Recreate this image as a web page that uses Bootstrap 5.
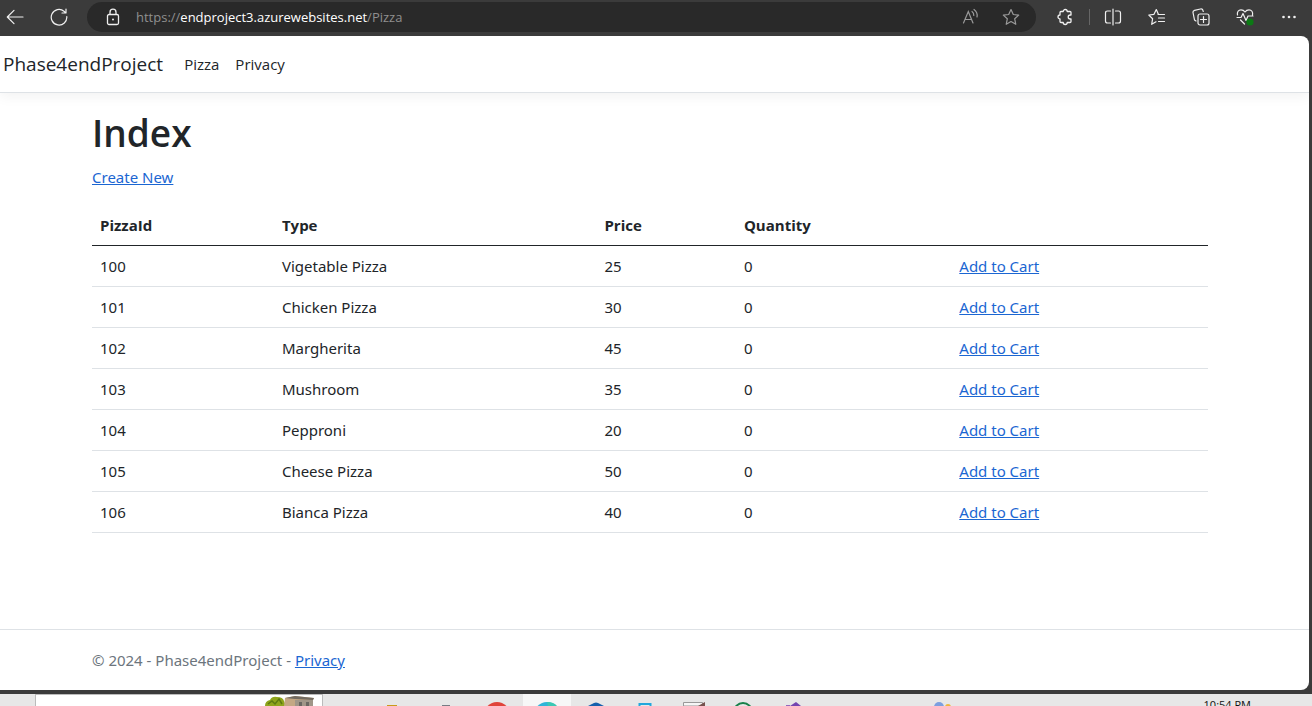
<!DOCTYPE html>
<html lang="en">
<head>
<meta charset="utf-8">
<meta name="viewport" content="width=device-width, initial-scale=1">
<title>Index - Phase4endProject</title>
<link rel="stylesheet" href="https://cdn.jsdelivr.net/npm/bootstrap@5.3.0/dist/css/bootstrap.min.css">
<script src="https://cdn.jsdelivr.net/npm/bootstrap@5.3.0/dist/js/bootstrap.bundle.min.js" defer></script>
<style>
  body { font-family: "Open Sans", "Noto Sans", sans-serif; font-size: 15px; line-height: 24px; background: #3b3b3b; }
  svg { display: block; flex: none; }

  /* browser toolbar */
  .toolbar { height: 36px; padding: 0 12px 2px 4px; color: #f0f0f0; }
  .tool { width: 22px; height: 22px; padding: 0; border: 0; background: none; color: inherit; display: flex; align-items: center; justify-content: center; flex: none; }
  .reload { margin-left: 22px; }
  .omnibox { height: 30px; margin-left: 17px; padding: 0 14px 0 16px; background: #292929; border-radius: 15px; }
  .address { font-size: 13px; line-height: 20px; color: #8f8f8f; text-decoration: none; margin-left: 13px; }
  .address b { font-weight: 400; color: #fff; }
  .dim { color: #9a9a9a; }
  .omnibox .dim { margin-left: 18px; }
  .tool-group { gap: 22px; margin-left: 18px; }
  .rule { width: 1px; height: 16px; background: #666; margin: 0 -10px 0 -9px; }

  /* web page */
  .viewport { background: #fff; border-radius: 0 8px 8px 0; margin: 0 3px 4px 0; overflow: hidden; }
  .site-head { height: 57px; border-bottom: 1px solid #dee2e6; box-shadow: 0 4px 12px rgba(0,0,0,.05); margin-bottom: 16px; padding: 0 3px; }
  .site-head .navbar-brand { font-size: 19px; line-height: 30px; padding: 0; margin-right: 13px; color: #212529; }
  .site-head .nav-link { color: #212529; padding: 8px; }
  .page-body { padding-right: 9px; font-family: "Noto Sans", "Open Sans", sans-serif; }
  h1 { font-family: "Open Sans", "Noto Sans", sans-serif; font-size: 37px; font-weight: 600; line-height: 48px; margin-bottom: 8px; }
  .page-body a { color: #1b66d2; }
  .table { margin-bottom: 16px; table-layout: fixed; }
  .table thead th { border-bottom-color: #212529; font-family: "Open Sans", "Noto Sans", sans-serif; }
  .c-id { width: 16.3%; } .c-type { width: 28.9%; } .c-price { width: 12.5%; } .c-qty { width: 19.3%; }
  .site-foot { border-top: 1px solid #dee2e6; line-height: 60px; color: #6c757d; }

  /* desktop taskbar, only its top edge is on screen */
  .taskbar { height: 12px; overflow: hidden; background: #e7e7e7; padding: 0 61px 0 35px; }
  .search { width: 288px; height: 12px; background: #fff; border: 1px solid #bbb; border-bottom: 0; padding-right: 7px; flex: none; }
  .apps { margin-left: 45px; gap: 1px; }
  .slot { width: 48px; height: 12px; display: flex; justify-content: center; flex: none; }
  .slot.on { background: #f7f7f7; }
  .weather { margin-left: 101px; }
  .clock { font-size: 11px; line-height: 16px; color: #111; padding-top: 3px; }
</style>
</head>
<body class="d-flex flex-column min-vh-100">

<div class="toolbar d-flex align-items-center">
  <button class="tool" type="button" aria-label="Back"><svg width="18" height="18" viewBox="0 0 18 18" fill="none" stroke="currentColor" stroke-width="1.2" stroke-linecap="round" stroke-linejoin="round"><path d="M17 9H1.500M8 2.300 1.300 9 8 15.700"/></svg></button>
  <button class="tool reload" type="button" aria-label="Refresh"><svg width="18" height="18" viewBox="0 0 18 18" fill="none" stroke="currentColor" stroke-width="1.2" stroke-linecap="round" stroke-linejoin="round"><path d="M16.800 8.500A7.800 7.800 0 1 1 14 3.200l1.800 1.700M16 1v4h-4"/></svg></button>
  <div class="omnibox d-flex align-items-center flex-grow-1">
    <svg width="20" height="20" viewBox="0 0 20 20" fill="none" stroke="#eee" stroke-width="1.300"><rect x="4.500" y="7.500" width="11" height="10" rx="1.500"/><path d="M7 7.500V5.200a3 3 0 0 1 6 0v2.300"/><circle cx="10" cy="12.500" r="1" fill="#eee" stroke="none"/></svg>
    <a class="address flex-grow-1" href="#">https://<b>endproject3.azurewebsites.net</b>/Pizza</a>
    <button class="tool dim" type="button" aria-label="Read aloud"><svg width="18" height="18" viewBox="0 0 18 18" fill="none" stroke="currentColor" stroke-width="1.200" stroke-linecap="round"><path d="M1.500 15 6.300 3.500 11 15M3 11.500h6.600M10 3.500q2 1.500 1.800 4M12 1.500q4 3 3 7.500"/></svg></button>
    <button class="tool dim" type="button" aria-label="Add to favorites"><svg width="18" height="18" viewBox="0 0 18 18" fill="none" stroke="currentColor" stroke-width="1.200" stroke-linejoin="round"><path d="m9 1.500 2.300 5 5.400.6-4 3.700 1.100 5.500L9 13.600l-4.800 2.700 1.100-5.500-4-3.700 5.400-.6z"/></svg></button>
  </div>
  <div class="tool-group d-flex align-items-center">
    <button class="tool" type="button" aria-label="Extensions"><svg width="18" height="18" viewBox="0 0 18 18" fill="none" stroke="currentColor" stroke-width="1.300" stroke-linejoin="round"><path d="M5 3.500h2.200a2 2 0 0 1 4 0H14q1 0 1 1V7h-.8a2 2 0 0 0 0 4h.8v2.500q0 1-1 1h-2.800a2 2 0 0 1-4 0H5q-1 0-1-1V11a2 2 0 0 1 0-4V4.500q0-1 1-1z"/></svg></button>
    <span class="rule"></span>
    <button class="tool" type="button" aria-label="Split screen"><svg width="18" height="18" viewBox="0 0 18 18" fill="none" stroke="currentColor" stroke-width="1.200" stroke-linecap="round"><path d="M9 1v16M6.500 3H3.500Q1.500 3 1.500 5v8q0 2 2 2h3M11.500 3h3q2 0 2 2v8q0 2-2 2h-3"/></svg></button>
    <button class="tool" type="button" aria-label="Favorites"><svg width="18" height="18" viewBox="0 0 18 18" fill="none" stroke="currentColor" stroke-width="1.200" stroke-linecap="round" stroke-linejoin="round"><path d="M10.500 6.500 8.300 1.500 6 6.300.800 7l3.800 3.700-.9 5.600L8 13.800M10 6.500h6.500M10.500 10h6M10.500 13.500h6"/></svg></button>
    <button class="tool" type="button" aria-label="Collections"><svg width="18" height="18" viewBox="0 0 18 18" fill="none" stroke="currentColor" stroke-width="1.200" stroke-linecap="round" stroke-linejoin="round"><rect x="6" y="6" width="11" height="11" rx="2"/><path d="M11.500 8.500v6M8.500 11.500h6M4 13 2.500 12 1 4.500Q.800 2.800 2.500 2.300L8.500 1q2-.4 2.500 1.500l.3 1"/></svg></button>
    <button class="tool" type="button" aria-label="Browser essentials"><svg width="18" height="18" viewBox="0 0 18 18" fill="none" stroke="currentColor" stroke-width="1.200" stroke-linecap="round" stroke-linejoin="round"><path d="M1.500 7C.8 4 2.500 1.800 5 1.800q2.500 0 4 2.200 1.500-2.200 4-2.200c2.500 0 4.200 2.200 3.500 5.200M1 9.500h4l2-4 3 7 2-4.500h5M4.500 12 8.500 16"/><circle cx="14" cy="14" r="3.600" fill="#0b7a14" stroke="none"/></svg></button>
    <button class="tool" type="button" aria-label="Settings and more"><svg width="16" height="16" viewBox="0 0 16 16" fill="currentColor"><circle cx="2.500" cy="8" r="1.300"/><circle cx="8" cy="8" r="1.300"/><circle cx="13.500" cy="8" r="1.300"/></svg></button>
  </div>
</div>

<div class="viewport d-flex flex-column flex-grow-1">
  <header>
    <nav class="site-head navbar navbar-expand">
      <a class="navbar-brand" href="#">Phase4endProject</a>
      <ul class="navbar-nav">
        <li class="nav-item"><a class="nav-link" href="#">Pizza</a></li>
        <li class="nav-item"><a class="nav-link" href="#">Privacy</a></li>
      </ul>
    </nav>
  </header>
  <div class="page-body flex-grow-1">
    <main class="container">
      <h1>Index</h1>
      <p class="mb-3"><a href="#">Create New</a></p>
      <table class="table">
        <thead><tr><th class="c-id">PizzaId</th><th class="c-type">Type</th><th class="c-price">Price</th><th class="c-qty">Quantity</th><th></th></tr></thead>
        <tbody>
          <tr><td>100</td><td>Vigetable Pizza</td><td>25</td><td>0</td><td><a href="#">Add to Cart</a></td></tr>
          <tr><td>101</td><td>Chicken Pizza</td><td>30</td><td>0</td><td><a href="#">Add to Cart</a></td></tr>
          <tr><td>102</td><td>Margherita</td><td>45</td><td>0</td><td><a href="#">Add to Cart</a></td></tr>
          <tr><td>103</td><td>Mushroom</td><td>35</td><td>0</td><td><a href="#">Add to Cart</a></td></tr>
          <tr><td>104</td><td>Pepproni</td><td>20</td><td>0</td><td><a href="#">Add to Cart</a></td></tr>
          <tr><td>105</td><td>Cheese Pizza</td><td>50</td><td>0</td><td><a href="#">Add to Cart</a></td></tr>
          <tr><td>106</td><td>Bianca Pizza</td><td>40</td><td>0</td><td><a href="#">Add to Cart</a></td></tr>
        </tbody>
      </table>
    </main>
  </div>
  <footer class="site-foot page-body">
    <div class="container">© 2024 - Phase4endProject - <a href="#">Privacy</a></div>
  </footer>
</div>

<div class="taskbar d-flex">
  <div class="search d-flex justify-content-end">
    <svg width="50" height="11" viewBox="0 0 50 11"><path d="M0 11q0-5 5-6 2-4 7-3 6 0 7 4l2 5z" fill="#8fa51c"/><path d="M3 9l4-3 3 3 4-5 3 5" fill="none" stroke="#5d7a10" stroke-width="1.500"/><path d="M20 3 30 1l19 2-1 2H30v6H19z" fill="#c4a884"/><path d="M30 5h18v6H30z" fill="#a09688"/><path d="M20 3 30 1l19 2-1 2-18-1z" fill="#736b60"/><path d="M34 7h3v4h-3zM41 7h3v4h-3z" fill="#6a6762"/></svg>
  </div>
  <div class="apps d-flex flex-grow-1">
    <div class="slot"><svg width="32" height="12"><path d="M11 12v-1h10v1z" fill="#c99a1a"/></svg></div>
    <div class="slot ms-1"><svg width="32" height="12"><path d="M13 12v-1h8v1z" fill="#777c84"/></svg></div>
    <div class="slot ms-1"><svg width="32" height="12"><circle cx="15" cy="21" r="13" fill="#e0443a"/></svg></div>
    <div class="slot on"><svg width="32" height="12"><circle cx="16" cy="21" r="13" fill="#2fb5d8"/><path d="M16 8q7 0 10 4H17z" fill="#3cc8b4"/></svg></div>
    <div class="slot"><svg width="32" height="12"><path d="M8 12 14 9q2-1 4 0l6 3z" fill="#1660ac"/></svg></div>
    <div class="slot"><svg width="32" height="12" fill="none"><path d="M10.500 12V10h11v2" stroke="#22a7dc" stroke-width="2"/></svg></div>
    <div class="slot"><svg width="32" height="12"><path d="M5.500 12V8.500h19V12z" fill="#f6f6f6" stroke="#999"/><path d="m20 12 7-4v4z" fill="#76524e"/></svg></div>
    <div class="slot"><svg width="32" height="12" fill="none"><circle cx="16" cy="18" r="9" stroke="#19814a" stroke-width="2"/></svg></div>
    <div class="slot"><svg width="32" height="12"><path d="m14 12 6-4 5 4z" fill="#7445b0"/><path d="M10 12v-1h4v1z" fill="#9268bd"/></svg></div>
    <div class="slot weather"><svg width="20" height="12"><circle cx="7" cy="13" r="5" fill="#7c9fdf"/><circle cx="16" cy="13" r="3" fill="#efb43b"/></svg></div>
  </div>
  <div class="clock">10:54 PM</div>
</div>
</body>
</html>
